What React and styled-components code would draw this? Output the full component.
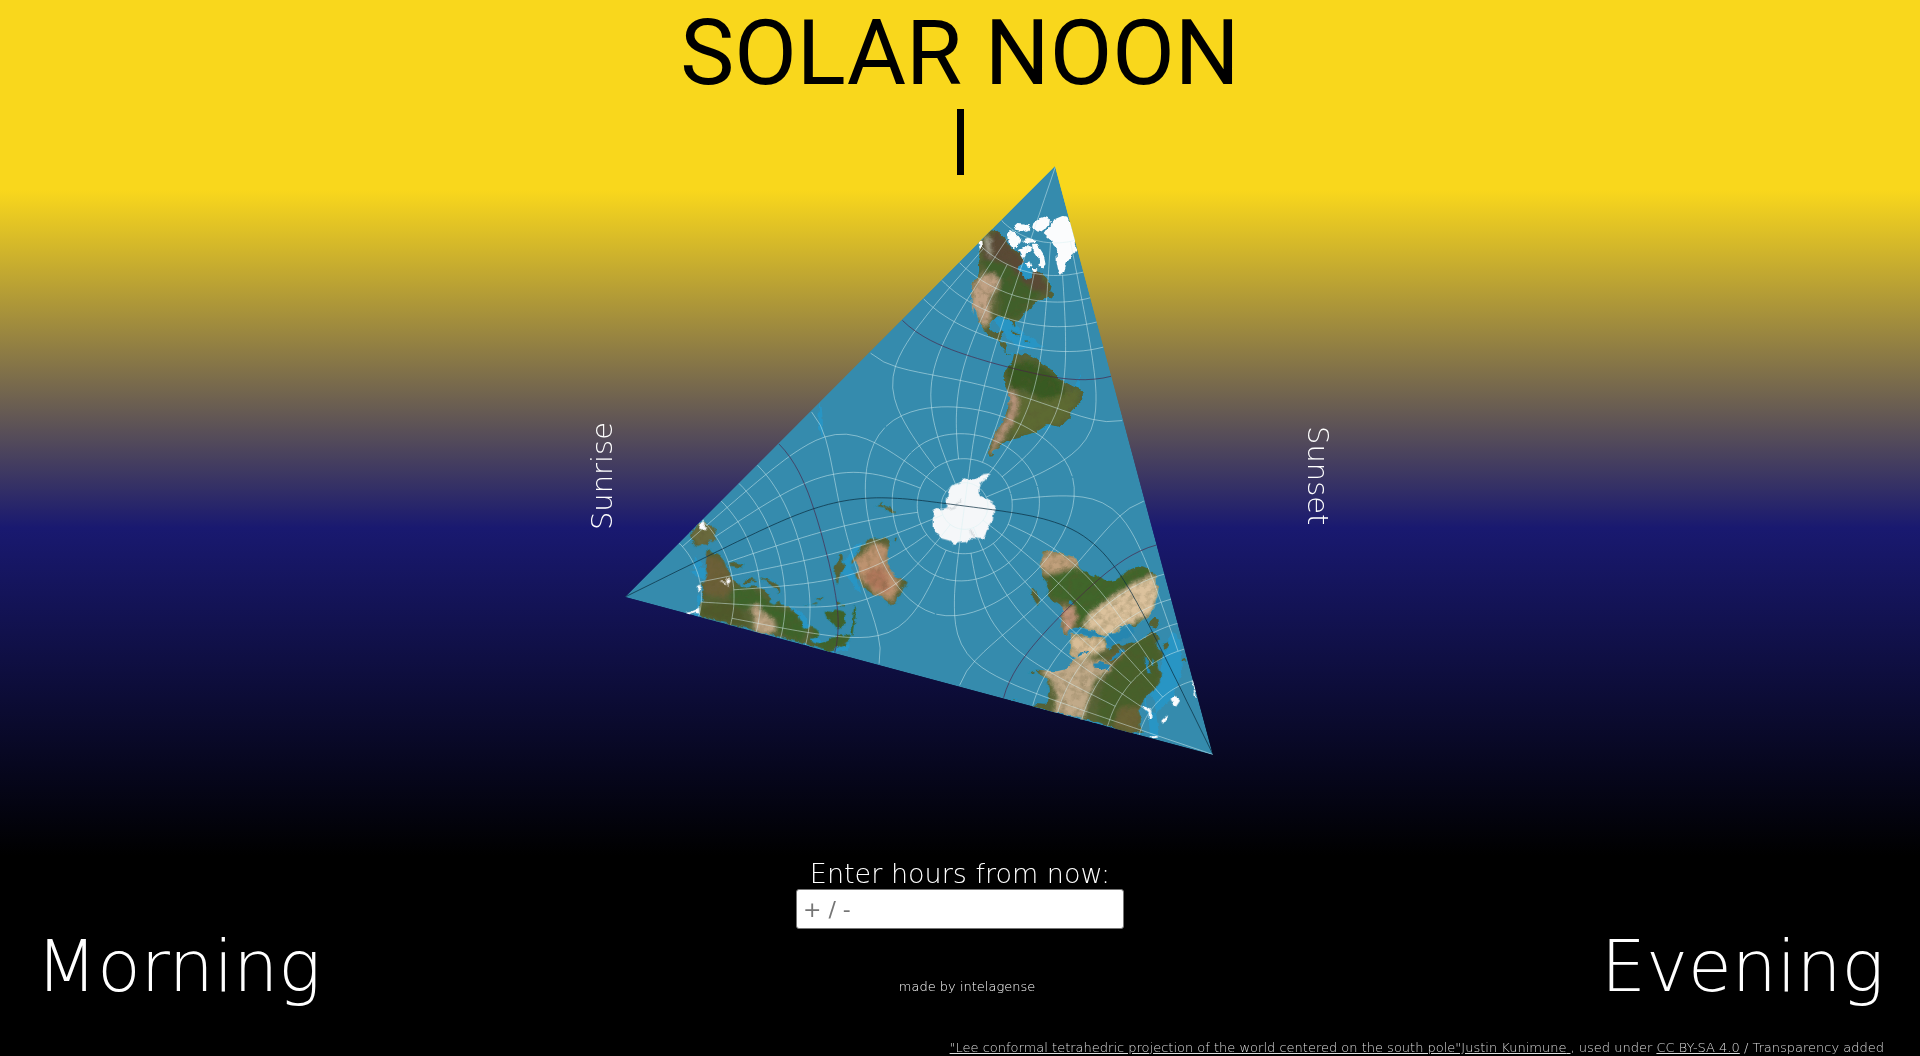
import React from "react";
import styled, { createGlobalStyle } from "styled-components";

const GlobalStyle = createGlobalStyle`
  *, *::before, *::after { box-sizing: border-box; }
  body { margin: 0; background: #000; }
`;

const thin = `"DejaVu Sans Light", "DejaVu Sans", sans-serif`;

const Page = styled.div`
  display: flex;
  flex-direction: column;
  align-items: center;
  min-height: 100vh;
  color: #fff;
  font-family: ${thin};
  font-weight: 200;
  background: linear-gradient(#f9d71c 18%, #191970 50%, #000 81%);
`;

const Header = styled.header`
  display: flex;
  flex-direction: column;
  align-items: center;
  color: #000;
`;

const Title = styled.h1`
  margin: 0;
  font: 400 91px/107px Roboto, sans-serif;
  white-space: nowrap;
`;

const NoonMark = styled.div`
  width: 7px;
  height: 66px;
  margin-top: 2px;
  background: #000;
`;

const Stage = styled.main`
  display: flex;
  align-items: center;
  justify-content: center;
  gap: 8px;
  margin-top: -33px;
`;

const SideLabel = styled.span`
  width: 24px;
  font-size: 29px;
  line-height: 24px;
  writing-mode: vertical-rl;
  transform: ${(p) => (p.$up ? "rotate(180deg)" : "none")};
`;

const Map = styled.svg`
  display: block;
  width: 676px;
  height: 668px;
`;

const HoursForm = styled.form`
  display: flex;
  flex-direction: column;
  align-items: center;
  margin-top: 49px;
`;

const HoursLabel = styled.label`
  font-size: 27px;
  line-height: 30px;
`;

const HoursInput = styled.input`
  width: 328px;
  height: 40px;
  padding: 1px 6px;
  border: 1px solid #767676;
  border-radius: 3px;
  background: #fff;
  font: 400 22px/30px "DejaVu Sans", sans-serif;
  &::placeholder { color: #757575; opacity: 1; }
`;

const Footer = styled.footer`
  display: flex;
  justify-content: space-between;
  width: 100%;
  padding: 0 36px;
`;

const DayPart = styled.span`
  font-size: 71px;
  line-height: 76px;
`;

const Maker = styled.p`
  margin: 0;
  padding: 48px 0 0 12px;
  font-size: 13px;
  line-height: 20px;
`;

const Credit = styled.p`
  align-self: flex-end;
  margin: 35px 36px 0;
  color: #ddd;
  font-size: 13px;
  line-height: 16px;
  white-space: nowrap;
`;

const CreditLink = styled.a`
  color: inherit;
`;

/* Lee conformal tetrahedric projection, centred on the south pole. */
const CENTRE = [964.5, 506];
const SCALE = 177.3;
const TURN = (-15 * Math.PI) / 180;
const CUT_LON = -22.5;
const RHO = Math.SQRT1_2;

function project(lat, lon) {
  const phi = ((lon - CUT_LON) * Math.PI) / 180;
  const cEnd = ((lat + 90) * Math.PI) / 180;
  const s0 = Math.sqrt(Math.PI);
  const s1 = Math.sqrt(Math.max(0, Math.PI - cEnd));
  const steps = 360;
  const h = (s0 - s1) / steps;
  let re = 0;
  let im = 0;
  for (let i = 0; i < steps; i++) {
    const s = s0 - (i + 0.5) * h;
    const half = (Math.PI - s * s) / 2;
    const r = Math.tan(half);
    const dr = (s * h) / Math.cos(half) ** 2;
    const q = (r / RHO) ** 3;
    const a = 1 - q * Math.cos(3 * phi);
    const b = -q * Math.sin(3 * phi);
    const m = Math.hypot(a, b) ** -0.5 * dr;
    const g = phi - Math.atan2(b, a) / 2;
    re += m * Math.cos(g);
    im += m * Math.sin(g);
  }
  const x = CENTRE[0] + SCALE * (re * Math.cos(TURN) - im * Math.sin(TURN));
  const y = CENTRE[1] + SCALE * (re * Math.sin(TURN) + im * Math.cos(TURN));
  return x.toFixed(1) + " " + y.toFixed(1);
}

function meridian(lon) {
  const end = lon % 90 === 0 ? 90 : lon % 30 === 0 ? 75 : 60;
  const pts = [];
  for (let lat = -end; lat <= end; lat += 3) pts.push(project(lat, lon));
  return "M" + pts.join("L");
}

function parallel(lat) {
  let d = "";
  for (let k = 0; k < 3; k++) {
    const pts = [];
    for (let f = 0; f <= 120; f += 4) {
      const g = Math.min(119.7, Math.max(0.3, f));
      pts.push(project(lat, CUT_LON + k * 120 + g));
    }
    d += "M" + pts.join("L");
  }
  return d;
}

const lons = [];
for (let l = -165; l < 180; l += 15) if (l !== 0) lons.push(l);
const lats = [-75, -60, -45, -30, -15, 15, 30, 45, 60, 75];
const GRID = lons.map(meridian).join("") + lats.map(parallel).join("");
const EQUATOR = parallel(0);
const PRIME = meridian(0) + meridian(180);

/* Each sheet keeps its own origin; three units of a sheet are one of the map. */
const SHEETS = [
  {
    id: "americas",
    at: [900, 150],
    land: [
      "M238 276L262 250 280 238 300 246 316 262 322 278 336 294 352 306 366 322 374 334 362 346 358 362 370 378 384 388 396 384 398 366 408 358 422 366 436 378 444 392 456 410 452 424 464 434 460 444 440 442 430 454 416 452 404 462 392 474 378 486 372 498 356 508 346 516 348 530 342 532 336 516 322 506 306 502 290 504 276 510 270 524 272 540 284 552 292 546 304 540 312 544 306 560 302 572 318 574 322 590 318 602 328 612 338 612 334 620 320 612 308 596 300 578 284 568 264 554 250 540 238 520 232 500 228 482 220 470 222 494 216 480 214 450 212 420 218 400 232 380 236 360 234 330 240 304Z",
      "M340 612L352 606 366 612 378 608 394 618 412 624 424 640 440 650 458 658 472 674 480 688 494 694 520 708 540 716 550 732 548 748 534 764 522 778 512 790 510 806 494 822 476 832 456 826 438 826 420 840 408 846 392 852 374 858 356 866 336 870 320 874 308 884 298 896 288 902 276 908 282 920 268 922 262 908 266 888 278 868 290 842 304 820 314 798 322 772 328 748 324 728 314 706 308 682 312 662 324 646 336 636Z",
      "M326 540L340 544 352 550 362 562 350 558 338 550ZM372 570L386 570 388 576 374 577Z",
    ],
    patches: [
      ["#3f5f2b", "M240 330L300 330 380 380 440 410 350 505 300 500 300 420 260 370Z"],
      ["#5a4a36", "M245 280L290 240 340 300 420 370 450 430 400 420 330 350 290 330 250 330Z"],
      ["#c0a184", "M215 410L250 370 290 375 300 400 275 440 270 520 250 535 230 490 210 480Z"],
      ["#b0ae99", "M250 255L270 265 275 330 262 300Z"],
      ["#375a24", "M320 645L400 635 480 690 500 740 440 770 380 720 330 720Z"],
      ["#5d6b33", "M350 730L440 750 540 720 500 810 390 850 330 850Z"],
      ["#b69379", "M318 718L345 724 358 750 346 800 318 850 282 905 264 915 290 850 330 780Z"],
    ],
    ice: [
      "M434 252L448 232 456 216 470 206 490 198 506 202 510 214 518 226 520 244 526 262 524 282 530 296 526 310 514 320 502 336 496 352 492 370 482 374 474 360 470 340 470 318 472 300 460 288 452 268Z",
      "M400 220L416 206 434 200 450 206 448 222 436 238 424 246 408 244 396 234ZM342 232L352 222 378 224 390 226 386 240 366 246 346 242ZM322 258L334 240 352 254 364 270 356 290 342 298 328 282ZM366 270L386 264 410 270 404 280 380 282ZM354 300L380 288 396 294 378 312 366 324ZM396 284L412 284 424 302 436 322 440 342 428 358 418 348 422 332 408 314 398 300ZM378 340L388 330 394 350 384 358ZM398 356L412 358 408 368 398 364ZM236 278L244 274 246 294 240 302Z",
    ],
  },
  {
    id: "pacific",
    at: [620, 480],
    land: [
      "M206 162L222 148 240 128 252 126 268 136 284 142 288 156 282 166 290 180 276 186 268 180 266 194 250 190 240 202 226 200 216 184Z",
      "M262 204L272 206 278 216 296 220 306 234 318 246 324 266 334 284 342 300 356 308 360 320 376 324 390 318 410 318 432 328 448 342 456 356 448 366 462 374 478 362 484 376 500 376 520 388 534 404 544 424 548 440 560 446 574 438 590 448 600 462 588 470 572 474 580 488 596 492 616 484 636 470 664 466 692 464 688 482 670 494 650 504 630 516 610 510 575 500 450 464 330 434 250 412 236 402 238 388 236 368 250 358 244 340 250 328 240 308 256 302 262 284 256 262 258 240Z",
      "M694 238L706 228 714 214 722 200 736 188 754 174 776 176 794 174 808 184 814 196 804 212 802 232 800 250 812 266 820 284 840 294 864 306 860 316 846 326 844 340 832 358 824 372 806 374 790 358 774 346 756 342 738 332 724 316 718 300 706 290 704 280 716 274 714 256 706 246 692 250Z",
      "M656 226L666 216 670 232 668 246 674 260 666 280 658 292 656 312 648 316 646 296 640 276 644 258 652 244Z",
      "M616 392L634 396 646 388 662 392 676 396 674 410 676 430 664 442 650 444 640 430 624 418Z",
      "M702 378L708 384 706 410 704 440 700 464 694 462 698 430 700 400ZM328 250L346 246 364 250 374 256 360 264 342 262 326 258ZM374 298L392 292 410 298 412 306 396 304 384 310 366 318ZM418 290L436 294 456 300 474 310 482 330 480 344 470 330 454 318 440 306 424 302ZM768 80L780 66 788 64 784 74 796 76 812 82 826 96 822 102 806 94 790 84ZM818 180L826 170 832 174 826 186ZM584 356L604 350 614 356 600 362ZM552 374L572 372 560 380ZM656 376L676 372 670 380ZM560 378L590 364 596 372ZM650 360L664 366 654 376Z",
    ],
    patches: [
      ["#6b6a3c", "M210 150L280 130 290 190 230 200Z"],
      ["#6d6038", "M250 220L310 240 340 310 320 350 250 340Z"],
      ["#3d652a", "M330 330L400 325 450 370 530 400 560 450 540 490 470 450 430 400 340 380Z"],
      ["#3d652a", "M600 380L720 370 710 470 620 520 570 480Z"],
      ["#4f5a2c", "M240 380L330 360 370 400 380 440 250 410Z"],
      ["#c2a787", "M392 384L410 370 430 400 460 420 468 450 440 464 400 450 404 420Z"],
      ["#bd936f", "M700 240L760 190 808 200 800 250 840 300 820 366 780 350 720 300Z"],
      ["#b0785c", "M740 270L790 260 810 320 790 340 740 310Z"],
      ["#5b6432", "M730 190L760 174 810 180 800 190 760 188ZM835 300L862 306 832 352Z"],
    ],
    ice: [
      "M236 146L246 122 262 146 248 148ZM194 396L214 392 224 384 238 378 238 404 226 402 222 394 210 402ZM230 320L240 312 242 328 234 334ZM318 300L328 292 332 306 324 318ZM300 302L316 306 318 314Z",
    ],
  },
  {
    id: "afroeurasia",
    at: [940, 500],
    land: [
      "M296 186L308 168 308 154 318 150 336 156 354 154 374 162 396 168 412 178 416 194 426 208 444 218 458 228 472 222 490 238 506 246 526 242 536 232 552 220 566 208 584 200 604 198 620 204 636 212 648 226 648 244 656 262 654 282 648 300 646 318 636 340 620 352 606 362 594 376 578 384 574 374 556 374 540 384 534 396 514 398 500 410 486 408 460 392 430 386 404 384 390 392 382 408 374 406 366 388 364 368 362 346 368 332 362 320 340 304 322 288 326 270 318 248 308 230 304 210Z",
      "M394 400L418 402 450 410 478 414 496 412 500 424 498 442 512 450 520 438 534 432 548 436 570 426 584 428 604 412 620 402 634 392 656 404 660 416 646 432 658 446 672 462 664 476 652 490 654 506 664 520 660 548 646 566 630 580 616 594 606 612 594 630 602 650 600 672 606 704 552 694 450 664 350 636 280 622 290 608 314 610 324 596 326 574 320 548 316 532 298 524 286 508 302 508 322 512 350 514 376 508 392 490 410 474 396 472 388 456 390 436 388 420Z",
      "M268 266L278 262 286 270 294 286 300 302 298 322 290 314 280 298 274 282ZM626 366L640 352 656 356 660 372 646 388 630 380ZM264 520L278 514 284 520 272 526ZM212 602L224 594 228 600ZM722 480L732 472 742 476 742 486 728 486ZM664 432L684 424 686 440 678 454 668 446Z",
    ],
    patches: [
      ["#c1a07c", "M296 186L320 152 410 170 420 200 360 220 310 220Z"],
      ["#3f662a", "M320 230L400 200 480 230 540 230 600 198 640 215 560 260 500 300 440 370 400 370 400 310 330 290Z"],
      ["#dcc29d", "M430 384L450 340 520 290 580 250 646 226 656 280 640 340 570 374 500 410Z"],
      ["#c4957b", "M362 320L400 320 410 350 390 400 370 400Z"],
      ["#d8bd97", "M388 402L490 414 500 445 430 480 392 470Z"],
      ["#c1aa89", "M300 510L400 480 480 480 520 500 460 550 430 660 340 640 350 590 330 540Z"],
      ["#46602b", "M500 520L560 440 640 400 664 480 650 560 600 610 600 700 470 660 480 600Z"],
      ["#6b6336", "M540 620L600 620 600 700 520 680ZM500 470L560 440 550 470 510 500Z"],
    ],
    ice: [
      "M604 616L622 618 634 632 634 656 626 656 626 636ZM692 596L706 586 720 602 708 620 698 612ZM664 662L684 642 682 656 672 672ZM628 712L642 708 656 714 640 718ZM756 540L762 544 770 590 764 584Z",
    ],
  },
];

const INLETS =
  "M396 386L430 388 486 404 488 410 440 404 400 396ZM498 416L514 404 530 400 542 386 576 376 582 400 564 408 544 420 528 430 514 444 500 434ZM412 458L448 454 446 462 430 460 414 472ZM462 488L480 486 508 496 506 510 486 508 468 500ZM508 478L530 462 548 442 552 454 530 476 510 484ZM610 470L622 480 632 520 622 520ZM638 470L646 480 640 498 636 490ZM388 300L398 302 398 316 390 312Z";

const SHALLOWS = [
  "M1012 265L1022 258 1034 276 1028 284 1016 278ZM990 315L1012 318 1024 334 1044 346 1020 350 1006 336ZM1080 375L1080 395 1072 410 1050 428 1010 438 1060 416Z",
  "M780 603L800 610 820 640 830 646 852 634 852 616 848 650 820 656 800 640ZM838 570L856 545 862 542 852 568 862 596 850 580ZM690 572L704 568 720 584 744 590 730 594ZM698 594L704 600 690 640Z",
  "M1143 690L1160 675 1163 650 1172 632 1180 640 1182 672 1174 696 1156 714 1146 712ZM1146 690L1150 735 1160 738 1154 700ZM819 404L822 410 824 440 818 430ZM696 555L702 563 699 570 694 568Z",
];

function WorldMap() {
  return (
    <Map viewBox="622 142 676 668" role="img" aria-label="World map">
      <defs>
        <clipPath id="edge">
          <path d="M1055 166L625 597 1213 755Z" />
        </clipPath>
        <filter id="soft" x="-20%" y="-20%" width="140%" height="140%">
          <feGaussianBlur stdDeviation="7" />
        </filter>
        <filter id="shore" x="-5%" y="-5%" width="110%" height="110%">
          <feTurbulence type="fractalNoise" baseFrequency="0.14" numOctaves="3" seed="4" result="n" />
          <feDisplacementMap in="SourceGraphic" in2="n" scale="5" xChannelSelector="R" yChannelSelector="G" />
        </filter>
        <filter id="grain" x="0" y="0" width="100%" height="100%">
          <feTurbulence type="fractalNoise" baseFrequency="0.05" numOctaves="4" seed="9" />
          <feColorMatrix values="0 0 0 0 0.1  0 0 0 0 0.09  0 0 0 0 0.03  1.8 0 0 0 -0.75" />
          <feComposite in2="SourceAlpha" operator="in" />
        </filter>
        {SHEETS.map((s) => (
          <clipPath id={s.id} key={s.id}>
            <path d={s.land.join("")} />
          </clipPath>
        ))}
      </defs>
      <g clipPath="url(#edge)">
        <path d="M1055 166L625 597 1213 755Z" fill="#358bad" />
        <g fill="#1f9fdc" opacity="0.5" filter="url(#shore)">
          {SHALLOWS.map((d) => (
            <path d={d} key={d} />
          ))}
        </g>
        <g filter="url(#shore)">
          {SHEETS.map((s) => (
            <g key={s.id} transform={`translate(${s.at[0]} ${s.at[1]}) scale(${1 / 3})`}>
              <path d={s.land.join("")} fill="#566335" stroke="#2595c4" strokeWidth="3" />
              <g clipPath={`url(#${s.id})`}>
                <g filter="url(#soft)">
                  {s.patches.map(([fill, d]) => (
                    <path d={d} fill={fill} key={d} />
                  ))}
                </g>
              </g>
              <path d={s.land.join("")} filter="url(#grain)" opacity="0.4" />
              {s.id === "afroeurasia" && <path d={INLETS} fill="#2586b0" />}
              <path d={s.ice.join("")} fill="#fbfcfd" />
            </g>
          ))}
          <g transform={`translate(780 300) scale(${1 / 3})`}>
            <path
              d="M504 576L518 556 542 546 552 534 566 540 582 540 598 530 612 522 632 520 620 534 606 550 596 562 596 580 602 590 622 596 640 606 646 622 640 644 638 664 628 680 618 700 610 718 590 716 572 714 558 726 540 728 524 732 508 722 486 716 470 700 458 682 458 658 460 636 468 626 484 630 498 626 500 606Z"
              fill="#f5f7f9"
            />
            <path d="M498 628L524 622 544 600M572 690L580 712" fill="none" stroke="#ced4d8" strokeWidth="4" />
          </g>
        </g>
        <g fill="none">
          <path d={GRID} stroke="#d8f0f2" strokeOpacity="0.62" strokeWidth="0.8" />
          <path d={EQUATOR} stroke="#4b2448" strokeOpacity="0.75" strokeWidth="0.9" />
          <path d={PRIME} stroke="#0b2e40" strokeOpacity="0.8" strokeWidth="0.9" />
        </g>
      </g>
    </Map>
  );
}

export default function App() {
  return (
    <>
      <GlobalStyle />
      <Page>
        <Header>
          <Title>SOLAR NOON</Title>
          <NoonMark />
        </Header>
        <Stage>
          <SideLabel $up>Sunrise</SideLabel>
          <WorldMap />
          <SideLabel>Sunset</SideLabel>
        </Stage>
        <HoursForm onSubmit={(e) => e.preventDefault()}>
          <HoursLabel htmlFor="hours">Enter hours from now:</HoursLabel>
          <HoursInput id="hours" type="text" placeholder="+ / -" />
        </HoursForm>
        <Footer>
          <DayPart>Morning</DayPart>
          <Maker>made by intelagense</Maker>
          <DayPart>Evening</DayPart>
        </Footer>
        <Credit>
          <CreditLink href="#projection">
            "Lee conformal tetrahedric projection of the world centered on the south pole"Justin Kunimune{" "}
          </CreditLink>
          , used under <CreditLink href="#license">CC BY-SA 4.0</CreditLink> / Transparency added
        </Credit>
      </Page>
    </>
  );
}
